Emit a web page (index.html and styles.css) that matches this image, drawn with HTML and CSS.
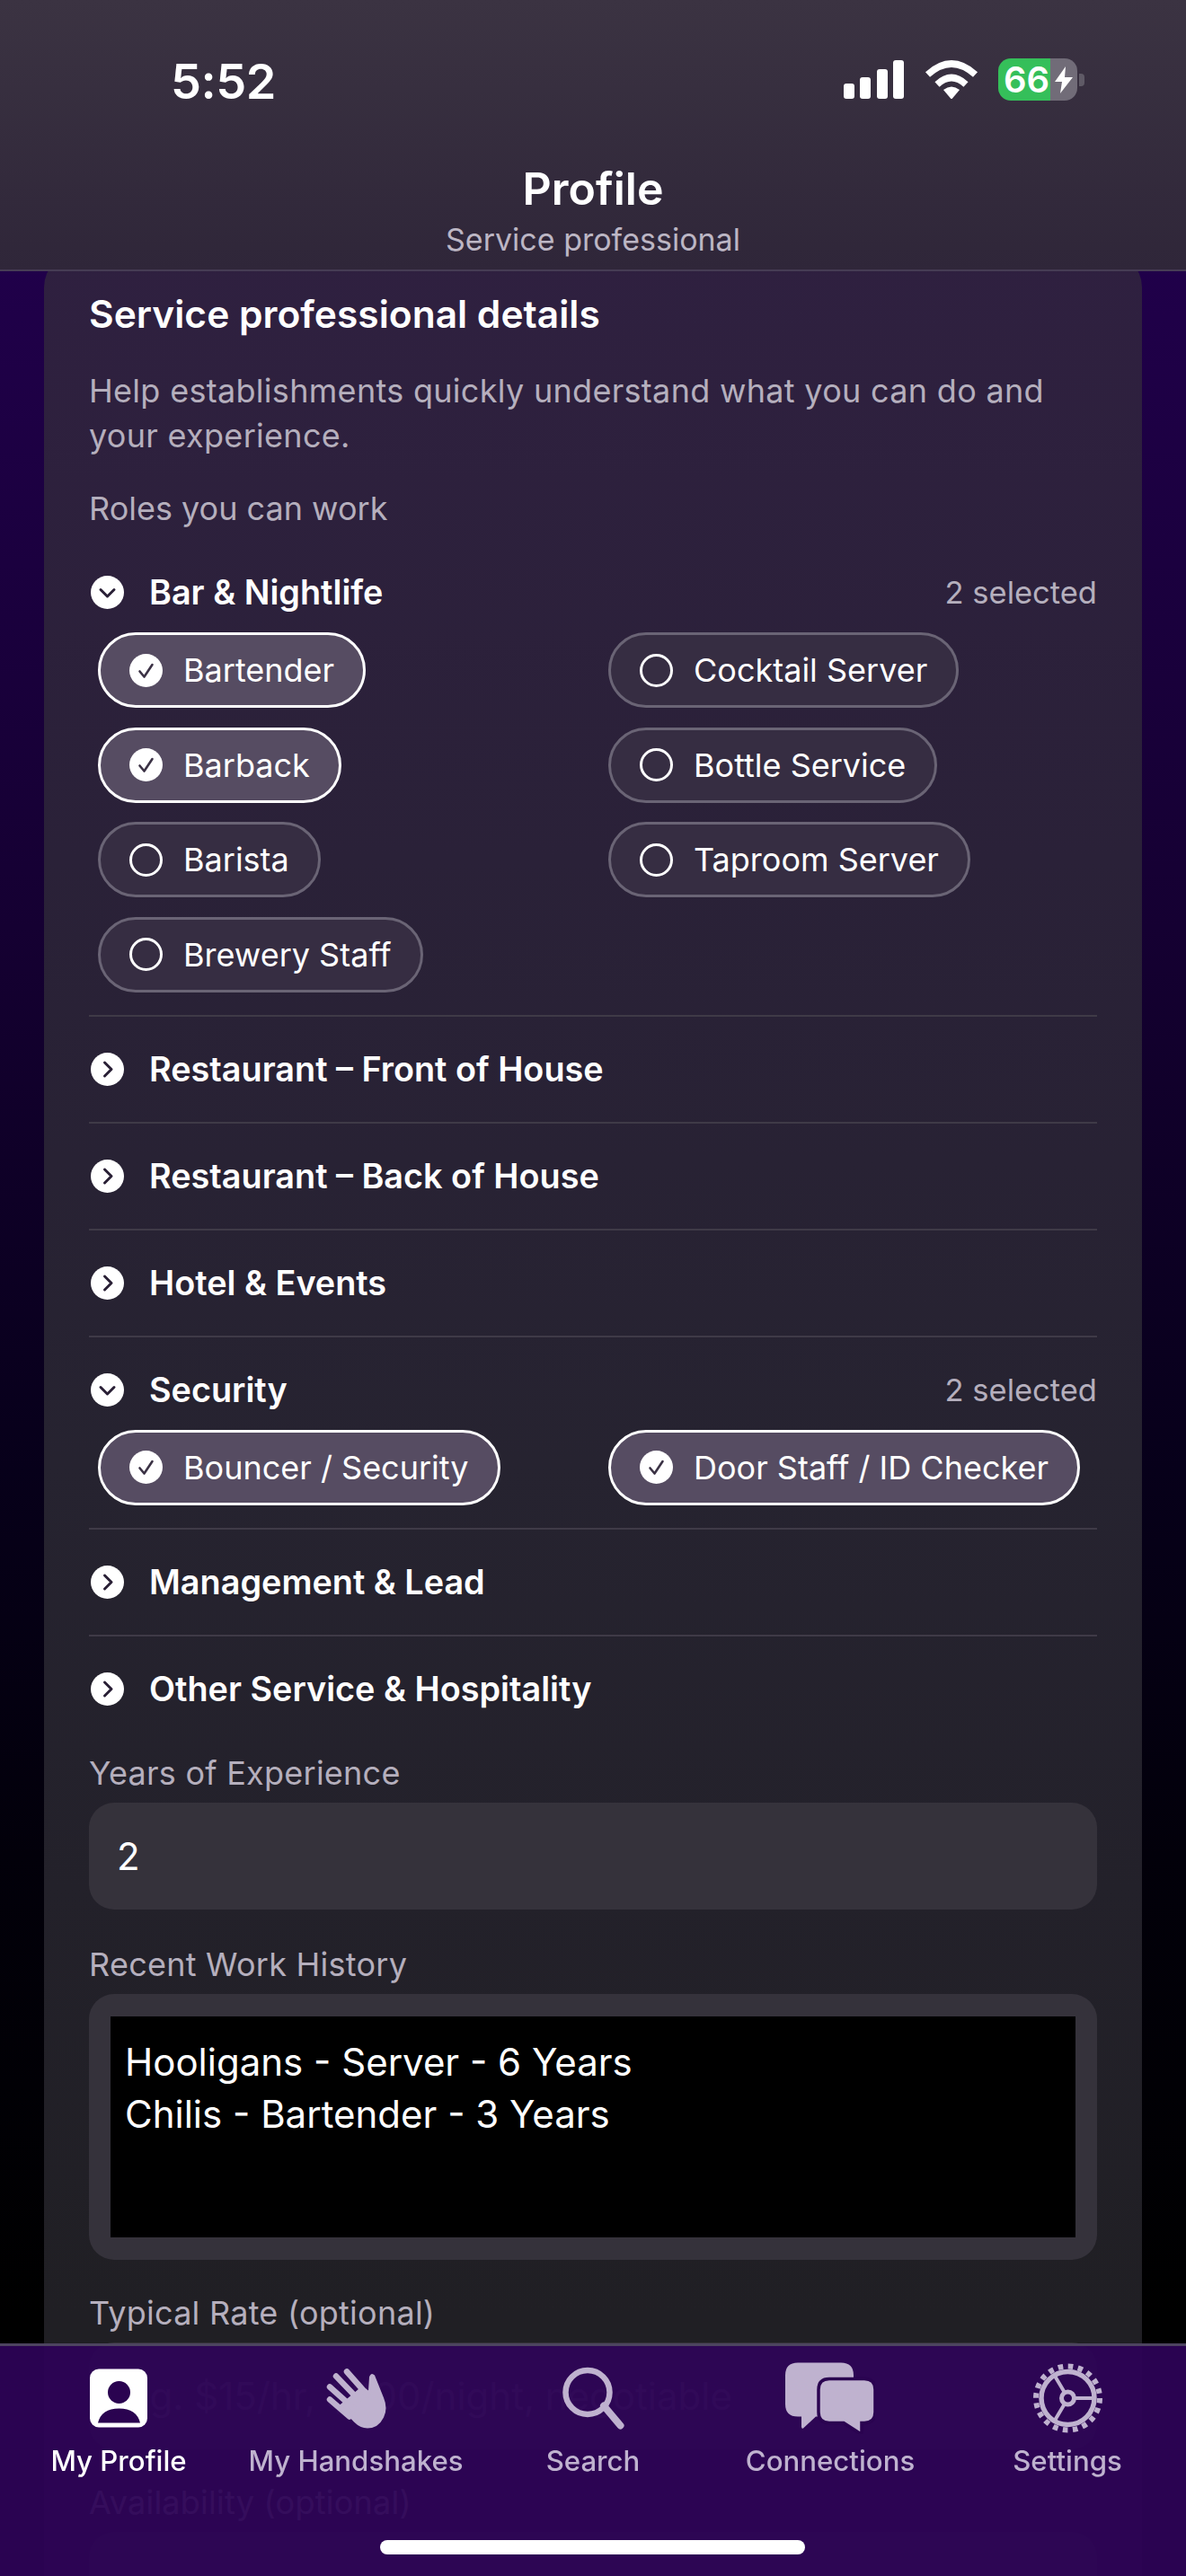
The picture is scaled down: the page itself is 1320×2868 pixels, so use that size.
FILE: index.html
```html
<!DOCTYPE html>
<html lang="en">
<head>
  <meta charset="UTF-8" />
  <meta name="viewport" content="width=device-width, initial-scale=1.0" />
  <title>Profile</title>
  <link rel="stylesheet" href="styles.css">
</head>
<body>
  <!-- Shared icons -->
  <svg class="sprite" aria-hidden="true">
    <symbol id="i-open" viewBox="0 0 37 37"><circle cx="18.5" cy="18.5" r="18.5" fill="#fff"/><path d="M11 15.5l7.5 7.5 7.5-7.5" fill="none" stroke="#2a2036" stroke-width="3" stroke-linecap="round" stroke-linejoin="round"/></symbol>
    <symbol id="i-closed" viewBox="0 0 37 37"><circle cx="18.5" cy="18.5" r="18.5" fill="#fff"/><path d="M15.5 11l7.5 7.5-7.5 7.5" fill="none" stroke="#2a2036" stroke-width="3" stroke-linecap="round" stroke-linejoin="round"/></symbol>
    <symbol id="i-check" viewBox="0 0 37 37"><circle cx="18.5" cy="18.5" r="18.5" fill="#fff"/><path d="M11.5 19.5l5 6 9-13.5" fill="none" stroke="#3b3245" stroke-width="2.6" stroke-linecap="round" stroke-linejoin="round"/></symbol>
    <symbol id="i-radio" viewBox="0 0 37 37"><circle cx="18.5" cy="18.5" r="17" fill="none" stroke="#fff" stroke-width="3"/></symbol>
  </svg>

  <!-- Top bar -->
  <header class="top-bar">
    <div class="status-bar">
      <span class="clock">5:52</span>
      <div class="status-icons">
        <div class="signal">
          <span class="bar bar-1"></span>
          <span class="bar bar-2"></span>
          <span class="bar bar-3"></span>
          <span class="bar bar-4"></span>
        </div>
        <svg class="wifi" viewBox="0 0 60 43" width="60" height="43">
          <path d="M3.5 16Q30-8 56.5 16" fill="none" stroke="#fff" stroke-width="7.5"/>
          <path d="M14 27Q30 12 46 27" fill="none" stroke="#fff" stroke-width="7.5"/>
          <path d="M21 33Q30 26 39 33L31 42.500Q30 43.500 29 42.500Z" fill="#fff"/>
        </svg>
        <div class="battery">
          <div class="battery-body">
            <span class="battery-level">66</span>
            <span class="battery-rest">
              <svg class="bolt" viewBox="0 0 20 30" width="20" height="30"><path d="M12 0L0 17H8L6 30L20 12H11Z" fill="#fff"/></svg>
            </span>
          </div>
          <span class="battery-nub"></span>
        </div>
      </div>
    </div>
    <h1>Profile</h1>
    <p class="subtitle">Service professional</p>
  </header>

  <main class="card">
    <h2>Service professional details</h2>
    <p class="intro">Help establishments quickly understand what you can do and your experience.</p>
    <p class="roles-label">Roles you can work</p>

    <section class="group open">
      <div class="group-head">
        <svg class="icon"><use href="#i-open"/></svg>
        <span class="group-name">Bar &amp; Nightlife</span>
        <span class="group-count">2 selected</span>
      </div>
      <div class="chips">
        <div class="chip-cell"><span class="chip on"><svg class="icon"><use href="#i-check"/></svg>Bartender</span></div>
        <div class="chip-cell"><span class="chip"><svg class="icon"><use href="#i-radio"/></svg>Cocktail Server</span></div>
        <div class="chip-cell"><span class="chip on"><svg class="icon"><use href="#i-check"/></svg>Barback</span></div>
        <div class="chip-cell"><span class="chip"><svg class="icon"><use href="#i-radio"/></svg>Bottle Service</span></div>
        <div class="chip-cell"><span class="chip"><svg class="icon"><use href="#i-radio"/></svg>Barista</span></div>
        <div class="chip-cell"><span class="chip"><svg class="icon"><use href="#i-radio"/></svg>Taproom Server</span></div>
        <div class="chip-cell"><span class="chip"><svg class="icon"><use href="#i-radio"/></svg>Brewery Staff</span></div>
      </div>
    </section>

    <section class="group">
      <div class="group-head">
        <svg class="icon"><use href="#i-closed"/></svg>
        <span class="group-name">Restaurant – Front of House</span>
      </div>
    </section>
    <section class="group">
      <div class="group-head">
        <svg class="icon"><use href="#i-closed"/></svg>
        <span class="group-name">Restaurant – Back of House</span>
      </div>
    </section>
    <section class="group">
      <div class="group-head">
        <svg class="icon"><use href="#i-closed"/></svg>
        <span class="group-name">Hotel &amp; Events</span>
      </div>
    </section>

    <section class="group open">
      <div class="group-head">
        <svg class="icon"><use href="#i-open"/></svg>
        <span class="group-name">Security</span>
        <span class="group-count">2 selected</span>
      </div>
      <div class="chips">
        <div class="chip-cell"><span class="chip on"><svg class="icon"><use href="#i-check"/></svg>Bouncer / Security</span></div>
        <div class="chip-cell"><span class="chip on"><svg class="icon"><use href="#i-check"/></svg>Door Staff / ID Checker</span></div>
      </div>
    </section>

    <section class="group">
      <div class="group-head">
        <svg class="icon"><use href="#i-closed"/></svg>
        <span class="group-name">Management &amp; Lead</span>
      </div>
    </section>
    <section class="group last">
      <div class="group-head">
        <svg class="icon"><use href="#i-closed"/></svg>
        <span class="group-name">Other Service &amp; Hospitality</span>
      </div>
    </section>

    <label class="field-label">Years of Experience</label>
    <div class="input">2</div>

    <label class="field-label">Recent Work History</label>
    <div class="textarea-wrap">
      <div class="textarea">Hooligans - Server - 6 Years<br>Chilis - Bartender - 3 Years</div>
    </div>

    <label class="field-label">Typical Rate (optional)</label>
    <div class="input placeholder">e.g. $15/hr, $200/night, negotiable</div>

    <label class="field-label">Availability (optional)</label>
    <div class="input placeholder"></div>
  </main>

  <!-- Bottom tabs -->
  <nav class="tab-bar">
    <a class="tab active">
      <svg viewBox="0 0 64 65" width="64" height="65">
        <rect width="64" height="65" rx="10" fill="#fff"/>
        <circle cx="32.500" cy="26" r="12.500" fill="#2a0350"/>
        <path d="M9 60Q13 44 32.500 44T56 60Z" fill="#2a0350"/>
      </svg>
      <span>My Profile</span>
    </a>
    <a class="tab">
      <svg viewBox="0 0 67 67" width="67" height="67">
        <path d="M14 42L40 20L47 25L48 10Q50 4 54 8L64 33Q69 45 64 55Q58 67 46 67Q38 67 31 60Z" fill="#bfb2cf"/>
        <g fill="none" stroke="#bfb2cf" stroke-width="6.500" stroke-linecap="round">
          <path d="M23 4L46 30"/>
          <path d="M11 9L36 35"/>
          <path d="M4 21L32 46"/>
          <path d="M4 35L26 54"/>
        </g>
      </svg>
      <span>My Handshakes</span>
    </a>
    <a class="tab">
      <svg viewBox="0 0 69 69" width="69" height="69">
        <circle cx="28" cy="28" r="24.500" fill="none" stroke="#bfb2cf" stroke-width="6.500"/>
        <path d="M46 43L64.500 65" fill="none" stroke="#bfb2cf" stroke-width="8" stroke-linecap="round"/>
      </svg>
      <span>Search</span>
    </a>
    <a class="tab">
      <svg viewBox="0 0 100 79" width="100" height="79">
        <path d="M14 0H62Q76 0 76 14V46Q76 60 62 60H34L20 73Q18 74 18 71V60H14Q0 60 0 46V14Q0 0 14 0Z" fill="#bfb2cf"/>
        <path d="M49 18H88Q100 18 100 30V55Q100 67 88 67H85V77Q85 80 82 78L65 67H49Q37 67 37 55V30Q37 18 49 18Z" fill="#bfb2cf" stroke="#2a0350" stroke-width="3.500"/>
      </svg>
      <span>Connections</span>
    </a>
    <a class="tab">
      <svg viewBox="0 0 77 77" width="77" height="77" fill="none" stroke="#bfb2cf">
        <circle cx="38.500" cy="38.500" r="35.500" stroke-width="6" stroke-dasharray="5.600 5.550"/>
        <circle cx="38.500" cy="38.500" r="29.500" stroke-width="5.500"/>
        <circle cx="38.500" cy="38.500" r="7" stroke-width="5"/>
        <path d="M46 38.500H68M34.800 32L23.500 13M34.800 45L23.500 64" stroke-width="4"/>
      </svg>
      <span>Settings</span>
    </a>
    <div class="home-indicator"></div>
  </nav>
</body>
</html>
```

FILE: styles.css
```css
/* Global Styles */
* {
  box-sizing: border-box;
}
html, body {
  height: 2868px;
}
body {
  margin: 0;
  overflow: hidden;
  font-family: 'Inter', 'Noto Sans', sans-serif;
  color: #fff;
  background: linear-gradient(180deg, #22004e 0%, #20004a 10%, #150032 36%, #07001a 57%, #02000a 72%, #000 90%);
}
.sprite {
  display: none;
}
.icon {
  width: 37px;
  height: 37px;
  flex: none;
}

/* Top Bar */
.top-bar {
  position: fixed;
  top: 0;
  left: 0;
  right: 0;
  z-index: 2;
  height: 302px;
  padding-top: 65px;
  text-align: center;
  background: linear-gradient(180deg, #3b3342 0%, #2f2639 100%);
  border-bottom: 2px solid #463c54;
}
.status-bar {
  display: flex;
  align-items: center;
  justify-content: space-between;
  height: 47px;
  padding: 0 113px 0 190px;
}
.clock {
  margin-top: 3px;
  font-size: 54px;
  font-weight: 600;
  letter-spacing: -0.5px;
}
.status-icons {
  display: flex;
  align-items: center;
}
.signal {
  display: flex;
  align-items: flex-end;
  gap: 6.500px;
  height: 43px;
  margin-right: 23px;
}
.bar {
  width: 12px;
  background: #fff;
  border-radius: 3px;
}
.bar-1 { height: 17px; }
.bar-2 { height: 24px; }
.bar-3 { height: 33px; }
.bar-4 { height: 43px; }
.wifi {
  margin-right: 22px;
}
.battery {
  display: flex;
  align-items: center;
  gap: 2px;
}
.battery-body {
  display: flex;
  width: 88px;
  height: 47px;
}
.battery-level {
  width: 58px;
  padding-left: 5px;
  font-size: 40px;
  font-weight: 600;
  line-height: 47px;
  text-align: center;
  background: #35bf5a;
  border-radius: 14px 0 0 14px;
}
.battery-rest {
  display: flex;
  align-items: center;
  flex: 1;
  padding-left: 5px;
  background: #716c78;
  border-radius: 0 14px 14px 0;
}
.battery-nub {
  width: 6px;
  height: 14px;
  background: #5f5a66;
  border-radius: 0 4px 4px 0;
}
.top-bar h1 {
  margin: 68px 0 0;
  font-size: 50px;
  font-weight: 600;
  line-height: 60px;
}
.subtitle {
  margin: 5px 0 0;
  font-size: 34px;
  line-height: 44px;
  color: #bcb6c4;
}

/* Card */
.card {
  margin: 280px 49px 0;
  padding: 45px 50px 0;
  height: 2700px;
  border-radius: 40px;
  background: linear-gradient(180deg, #2f2040 0%, #2a2138 25%, #262330 50%, #201f24 85%, #201f24 100%);
}
.card h2 {
  margin: 0;
  font-size: 42.500px;
  font-weight: 600;
  line-height: 50px;
}
.intro {
  margin: 35px 0 0;
  font-size: 36px;
  letter-spacing: 0.3px;
  line-height: 50px;
  color: #b5afbd;
}
.roles-label {
  margin: 34px 0 0;
  font-size: 36px;
  line-height: 44px;
  color: #b5afbd;
}

/* Role Groups */
.group {
  border-bottom: 2px solid #3f3a47;
}
.group.last {
  border-bottom: none;
}
.group.last .group-head {
  padding-bottom: 38px;
}
.roles-label + .group {
  margin-top: 13px;
}
.group-head {
  display: flex;
  align-items: center;
  padding: 40px 0 40px 2px;
}
.group.open .group-head {
  padding-bottom: 26px;
}
.group-name {
  flex: 1;
  margin-left: 28px;
  font-size: 37.800px;
  font-weight: 600;
  line-height: 37px;
}
.group-count {
  font-size: 34.500px;
  line-height: 37px;
  color: #b5afbd;
}
.chips {
  display: grid;
  grid-template-columns: 1fr 1fr;
  gap: 21.500px 36px;
  padding: 0 12px 25px 10px;
}
.chip-cell {
  display: flex;
}
.chip {
  display: flex;
  align-items: center;
  gap: 23px;
  height: 84px;
  padding: 0 32px;
  font-size: 36px;
  white-space: nowrap;
  border: 3px solid #6a6475;
  border-radius: 42px;
  background: #362d42;
}
.chip.on {
  border-color: #fff;
  background: #564c62;
}

/* Form Fields */
.field-label {
  display: block;
  margin-top: 13px;
  padding-top: 2px;
  font-size: 36px;
  letter-spacing: 0.25px;
  line-height: 44px;
  color: #b5afbd;
}
.input ~ .field-label {
  margin-top: 37px;
}
.textarea-wrap ~ .field-label {
  margin-top: 35px;
}
.input {
  height: 119px;
  margin-top: 11px;
  padding-left: 31px;
  font-size: 42px;
  line-height: 119px;
  background: #35323b;
  border-radius: 28px;
}
.input.placeholder {
  color: #77737f;
}
.textarea-wrap {
  height: 296px;
  margin-top: 11px;
  padding: 25px 24px;
  background: #35323b;
  border-radius: 28px;
}
.textarea {
  height: 100%;
  padding: 22px 16px;
  font-size: 42px;
  line-height: 58px;
  background: #000;
}

/* Bottom Tabs */
.tab-bar {
  position: fixed;
  left: 0;
  right: 0;
  bottom: 0;
  z-index: 2;
  display: grid;
  grid-template-columns: repeat(5, 1fr);
  height: 259px;
  padding-top: 18px;
  background: rgba(45, 3, 86, 0.94);
  border-top: 3px solid #4d4460;
}
.tab {
  display: flex;
  flex-direction: column;
  align-items: center;
  font-size: 31.200px;
  font-weight: 500;
  line-height: 40px;
  color: #bfb2cf;
}
.tab.active {
  color: #fff;
}
.tab svg {
  height: 80px;
  flex: none;
}
.tab span {
  margin-top: 10px;
}
.home-indicator {
  position: absolute;
  left: 423px;
  bottom: 24px;
  width: 473px;
  height: 16px;
  background: #fff;
  border-radius: 8px;
}
```
